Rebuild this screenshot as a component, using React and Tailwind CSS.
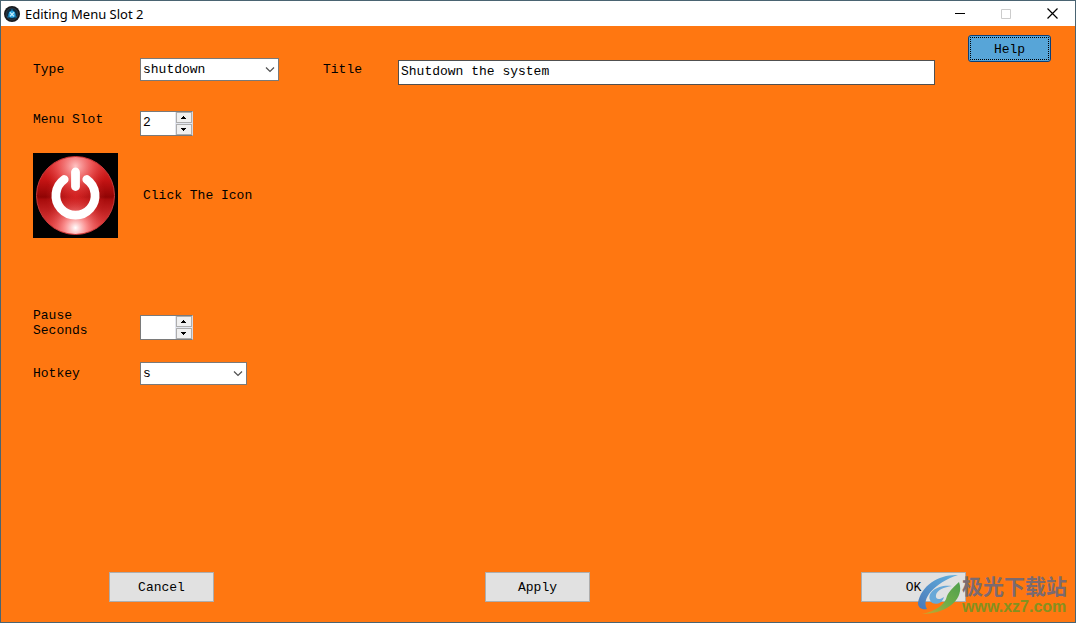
import React from "react";

const LABEL = "shrink-0 leading-[15px]";

function Select({ id, value, options, width }) {
  return (
    <div className={"relative shrink-0 " + width}>
      <select
        id={id}
        defaultValue={value}
        className="block h-[23px] w-full appearance-none border border-[#7a7a7a] bg-white pt-px pl-0.5 leading-5 text-black outline-none"
      >
        {options.map((o) => (
          <option key={o}>{o}</option>
        ))}
      </select>
      <svg className="pointer-events-none absolute top-2 right-1 h-2 w-[10px]" viewBox="0 0 10 8" fill="none" stroke="#505050" strokeWidth="1.2">
        <path d="M1 1.5 L5 5.5 L9 1.5" />
      </svg>
    </div>
  );
}

function StepButton({ label, down }) {
  return (
    <button
      type="button"
      aria-label={label}
      className="flex h-[11px] w-4 items-center justify-center border border-[#adadad] bg-[#f0f0f0]"
    >
      <svg className="h-[3px] w-[7px]" viewBox="0 0 7 3" shapeRendering="crispEdges">
        <path d={down ? "M1 0H6V1H5V2H4V3H3V2H2V1H1Z" : "M1 3H6V2H5V1H4V0H3V1H2V2H1Z"} />
      </svg>
    </button>
  );
}

function Spinner({ id, value }) {
  return (
    <div className="flex h-[25px] w-[53px] shrink-0 border border-[#7a7a7a] border-r-[#d5d9e2] bg-white">
      <input id={id} defaultValue={value} inputMode="numeric" className="w-[34px] min-w-0 bg-white pb-0.5 pl-0.5 outline-none" />
      <div className="flex flex-1 flex-col items-center justify-between bg-[#e3e6ee]">
        <StepButton label="Increase" />
        <StepButton label="Decrease" down />
      </div>
    </div>
  );
}

function AppIcon() {
  return (
    <svg className="h-4 w-4 shrink-0" viewBox="0 0 16 16">
      <circle cx="8" cy="8" r="8" fill="#17191d" />
      <circle cx="8" cy="8" r="6" fill="#0d2c42" stroke="#3a3f45" strokeWidth=".7" />
      <path d="M8 2.5 L13 11.5 H3Z" fill="#1372a8" />
      <circle cx="8" cy="8.3" r="3.4" fill="#2ba4df" />
      <path d="M6 6.3 L10 10.3 M10 6.3 L6 10.3" stroke="#c9f2ff" strokeWidth="1.2" />
    </svg>
  );
}

function PowerIcon() {
  return (
    <svg className="h-[85px] w-[85px]" viewBox="0 0 85 85" aria-hidden="true">
      <defs>
        <linearGradient id="base" x1="0" y1="0" x2="0" y2="1">
          <stop offset="0" stopColor="#e23a3a" />
          <stop offset=".3" stopColor="#c51414" />
          <stop offset=".52" stopColor="#900404" />
          <stop offset=".55" stopColor="#a80c0c" />
          <stop offset="1" stopColor="#ee4a4a" />
        </linearGradient>
        <radialGradient id="top" cx=".5" cy=".12" r=".42">
          <stop offset="0" stopColor="#ffc4c4" />
          <stop offset=".5" stopColor="#f56a6a" stopOpacity=".7" />
          <stop offset="1" stopColor="#e03030" stopOpacity="0" />
        </radialGradient>
        <radialGradient id="bottom" cx=".5" cy=".92" r=".42">
          <stop offset="0" stopColor="#fff" />
          <stop offset=".35" stopColor="#ff9a9a" stopOpacity=".85" />
          <stop offset="1" stopColor="#e03030" stopOpacity="0" />
        </radialGradient>
        <radialGradient id="middle">
          <stop offset="0" stopColor="#d32020" />
          <stop offset="1" stopColor="#d83030" stopOpacity="0" />
        </radialGradient>
      </defs>
      <rect width="85" height="85" fill="#000" />
      <circle cx="42.5" cy="42.5" r="39" fill="url(#base)" stroke="#c93a3a" strokeWidth="1" />
      <circle cx="42.5" cy="42.5" r="30" fill="url(#middle)" />
      <circle cx="42.5" cy="42.5" r="38.5" fill="url(#top)" />
      <circle cx="42.5" cy="42.5" r="38.5" fill="url(#bottom)" />
      <g fill="none" stroke="#fff" strokeWidth="8.8" strokeLinecap="round">
        <path d="M42.5 19 V33.5" />
        <path d="M31.2 26.5 A19.6 19.6 0 1 0 53.8 26.5" />
      </g>
    </svg>
  );
}

function Watermark() {
  return (
    <div className="pointer-events-none absolute right-2 bottom-[5px] flex items-center">
      <svg className="h-11 w-11" viewBox="0 -1 44 44">
        <defs>
          <linearGradient id="wb" x1="1" y1="0" x2="0" y2="1">
            <stop offset="0" stopColor="#62b2e0" />
            <stop offset="1" stopColor="#4a78b8" />
          </linearGradient>
          <linearGradient id="wg" x1="1" y1="0" x2="0" y2="1">
            <stop offset="0" stopColor="#4f9f4c" />
            <stop offset=".5" stopColor="#6fae4a" />
            <stop offset="1" stopColor="#d3a52a" />
          </linearGradient>
        </defs>
        <path d="M40 1 C22 0 3 11 0 29 C0 34 4 36 9 35 C3 25 16 9 40 1Z" fill="url(#wb)" />
        <path d="M34 12 C20 10 9 18 12 26 C14 32 24 31 26 23 C22 26 17 26 18 21 C19 16 26 13 34 12Z" fill="#68a8d8" />
        <path d="M41 8 C47 24 30 40 4 40 C18 37 27 31 29 22 C31 17 36 13 41 8Z" fill="url(#wg)" />
      </svg>
      <div className="font-bold whitespace-nowrap">
        <div className="font-['Noto_Sans_CJK_SC',sans-serif] text-[21px] leading-6 text-[#7b6a70]">极光下载站</div>
        <div className="font-['Liberation_Sans',sans-serif] text-[16px] leading-5 text-[#84911f]">www.xz7.com</div>
      </div>
    </div>
  );
}

const ACTION = "h-[30px] w-[105px] border border-[#adadad] bg-[#e1e1e1] pt-0.5";

export default function App() {
  return (
    <div className="relative flex min-h-screen flex-col border border-[#4a6472] bg-[#ff7711] font-['Liberation_Mono',monospace] text-[13px] text-black">
      <header className="flex h-[25px] items-center bg-white pl-[3px]">
        <AppIcon />
        <h1 className="ml-[5px] flex-1 font-['Noto_Sans',sans-serif] text-[13px] leading-6">Editing Menu Slot 2</h1>
        <button type="button" aria-label="Minimize" className="flex h-full w-[46px] items-center justify-center">
          <svg className="h-[10px] w-[10px]" viewBox="0 0 10 10"><path d="M0 4.5H10" stroke="#000" /></svg>
        </button>
        <button type="button" aria-label="Maximize" disabled className="flex h-full w-[46px] items-center justify-center">
          <svg className="h-[10px] w-[10px]" viewBox="0 0 10 10"><path d="M.5 .5H9.5V9.5H.5Z" fill="none" stroke="#ccc" /></svg>
        </button>
        <button type="button" aria-label="Close" className="flex h-full w-[46px] items-center justify-center">
          <svg className="h-[11px] w-[11px]" viewBox="0 0 11 11"><path d="M.5 .5L10.5 10.5M10.5 .5L.5 10.5" stroke="#000" strokeWidth="1.2" /></svg>
        </button>
      </header>

      <main className="flex flex-1 flex-col pt-[9px]">
        <div className="flex items-start pr-6 pl-8">
          <div className="flex flex-1 items-start pt-[23px]">
            <label htmlFor="type" className={LABEL + " w-[107px] pt-1"}>Type</label>
            <Select id="type" value="shutdown" options={["shutdown", "restart", "program"]} width="w-[139px]" />
            <label htmlFor="title" className={LABEL + " ml-11 w-[75px] pt-1"}>Title</label>
            <div className="flex min-w-0 flex-1 pt-0.5">
              <input
                id="title"
                defaultValue="Shutdown the system"
                className="h-[25px] w-full border border-[#505050] bg-white pb-0.5 pl-0.5 outline-none"
              />
            </div>
          </div>
          <button
            type="button"
            className="ml-[33px] h-[27px] w-[83px] rounded-[3px] border border-[#0b3f78] bg-[#57a5d8] pt-0.5 outline outline-dotted outline-black -outline-offset-3"
          >
            Help
          </button>
        </div>

        <div className="mt-[26px] flex items-start pl-8">
          <label htmlFor="slot" className={LABEL + " w-[107px] pt-px"}>Menu Slot</label>
          <Spinner id="slot" value="2" />
        </div>

        <div className="mt-[17px] flex items-center pl-8">
          <button type="button" aria-label="Choose icon" className="shrink-0">
            <PowerIcon />
          </button>
          <p className="ml-[25px]">Click The Icon</p>
        </div>

        <div className="mt-[70px] flex items-start pl-8">
          <label htmlFor="pause" className={LABEL + " w-[107px]"}>
            Pause
            <br />
            Seconds
          </label>
          <div className="pt-[7px]">
            <Spinner id="pause" value="" />
          </div>
        </div>

        <div className="mt-[22px] flex items-center pl-8">
          <label htmlFor="hotkey" className={LABEL + " w-[107px]"}>Hotkey</label>
          <Select id="hotkey" value="s" options={["s", "r", "p"]} width="w-[107px]" />
        </div>

        <footer className="mt-auto flex justify-between pt-6 pr-[109px] pb-5 pl-[108px]">
          <button type="button" className={ACTION}>Cancel</button>
          <button type="button" className={ACTION}>Apply</button>
          <button type="button" className={ACTION}>OK</button>
        </footer>
      </main>
      <Watermark />
    </div>
  );
}
